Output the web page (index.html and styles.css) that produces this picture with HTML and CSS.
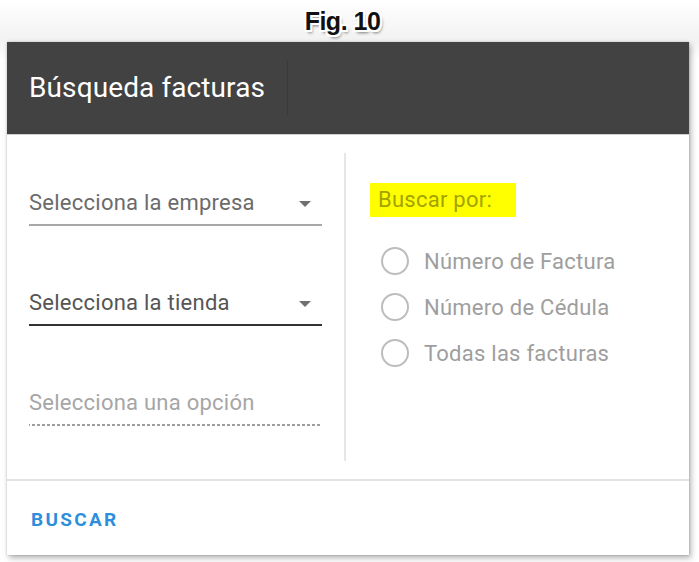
FILE: index.html
```html
<!DOCTYPE html>
<html lang="es">
<head>
<meta charset="utf-8">
<title>Búsqueda facturas</title>
<link rel="stylesheet" href="styles.css">
</head>
<body>
<div class="fig">Fig. 10</div>
<div class="card">
  <div class="header">
    <div class="title">Búsqueda facturas</div>
  </div>
  <div class="body">
    <div class="left">
      <div class="field">
        <span class="label">Selecciona la empresa</span>
        <span class="arrow"></span>
      </div>
      <div class="field active">
        <span class="label dark">Selecciona la tienda</span>
        <span class="arrow"></span>
      </div>
      <div class="field disabled">
        <span class="label light">Selecciona una opción</span>
      </div>
    </div>
    <div class="divider"></div>
    <div class="right">
      <div class="hl">Buscar por:</div>
      <div class="radios">
        <div class="radio"><span class="circle"></span><span>Número de Factura</span></div>
        <div class="radio"><span class="circle"></span><span>Número de Cédula</span></div>
        <div class="radio"><span class="circle"></span><span>Todas las facturas</span></div>
      </div>
    </div>
  </div>
  <div class="footer">
    <span class="btn">BUSCAR</span>
  </div>
</div>
</body>
</html>
```
FILE: styles.css
```css
html, body {
  margin: 0;
  padding: 0;
  background: #fff;
}
body {
  width: 699px;
  height: 562px;
  overflow: hidden;
  font-family: Roboto, "Liberation Sans", sans-serif;
  background: linear-gradient(#ffffff 0px, #f2f2f2 40px, #ffffff 60px);
}
.fig {
  height: 42px;
  box-sizing: border-box;
  padding-top: 6px;
  padding-right: 14px;
  text-align: center;
  font-family: "Liberation Sans", Arial, sans-serif;
  font-weight: 700;
  font-size: 25px;
  line-height: 30px;
  letter-spacing: -0.5px;
  color: #111;
  text-shadow:
    2px 0 0 #fff, -2px 0 0 #fff, 0 2px 0 #fff, 0 -2px 0 #fff,
    2px 2px 0 #fff, -2px -2px 0 #fff, 2px -2px 0 #fff, -2px 2px 0 #fff,
    2px 3px 3px rgba(0,0,0,0.5);
}
.card {
  margin-left: 7px;
  width: 682px;
  height: 513px;
  background: #fff;
  box-shadow: 2px 3px 6px rgba(0,0,0,0.3), 0 0 2px rgba(0,0,0,0.2);
  display: flex;
  flex-direction: column;
}
.header {
  height: 92px;
  background: #424242;
  border-bottom: 1px solid #cfcfcf;
  display: flex;
  align-items: center;
  padding-left: 22px;
  flex-shrink: 0;
}
.title {
  color: #fff;
  font-size: 28px;
  letter-spacing: 0.1px;
  line-height: 55px;
  height: 55px;
  padding-right: 22px;
  border-right: 1px solid #393939;
  margin-top: -2px;
}
.body {
  display: flex;
  padding: 18px 0;
  height: 308px;
  border-bottom: 2px solid #e2e2e2;
  flex-shrink: 0;
}
.left {
  width: 293px;
  padding: 37px 22px 0 22px;
}
.field {
  position: relative;
  height: 36px;
  border-bottom: 2px solid #a8a8a8;
  margin-bottom: 64px;
  box-sizing: border-box;
}
.field.active {
  border-bottom: 2px solid #333;
}
.field.disabled {
  border-bottom: none;
  background-image: linear-gradient(to right, #9e9e9e 60%, transparent 60%);
  background-size: 5px 2px;
  background-repeat: repeat-x;
  background-position: 3px 34px;
}
.label {
  display: block;
  font-size: 22px;
  letter-spacing: 0.25px;
  line-height: 26px;
  color: #6b6b6b;
}
.label.dark {
  color: #555;
}
.label.light {
  color: #a6a6a6;
}
.arrow {
  position: absolute;
  right: 11px;
  top: 11px;
  width: 0;
  height: 0;
  border-left: 6px solid transparent;
  border-right: 6px solid transparent;
  border-top: 6px solid #707070;
}
.divider {
  width: 2px;
  background: #e6e6e6;
}
.right {
  padding-left: 24px;
  padding-top: 30px;
}
.hl {
  width: 146px;
  height: 34px;
  box-sizing: border-box;
  background: #ffff00;
  color: #a3a300;
  font-size: 22px;
  letter-spacing: 0.25px;
  line-height: 34px;
  padding-left: 8px;
}
.radios {
  margin-top: 30px;
  padding-left: 11px;
  display: flex;
  flex-direction: column;
  gap: 18px;
}
.radio {
  display: flex;
  align-items: center;
  gap: 15px;
  height: 28px;
  font-size: 22px;
  letter-spacing: 0.25px;
  color: #9e9e9e;
}
.circle {
  width: 28px;
  height: 28px;
  box-sizing: border-box;
  border: 2px solid #bdbdbd;
  border-radius: 50%;
}
.footer {
  flex: 1;
  display: flex;
  align-items: center;
  padding-left: 24px;
}
.btn {
  color: #2d8fdc;
  font-weight: 700;
  font-size: 19px;
  letter-spacing: 2.3px;
  margin-top: 2px;
}
```
